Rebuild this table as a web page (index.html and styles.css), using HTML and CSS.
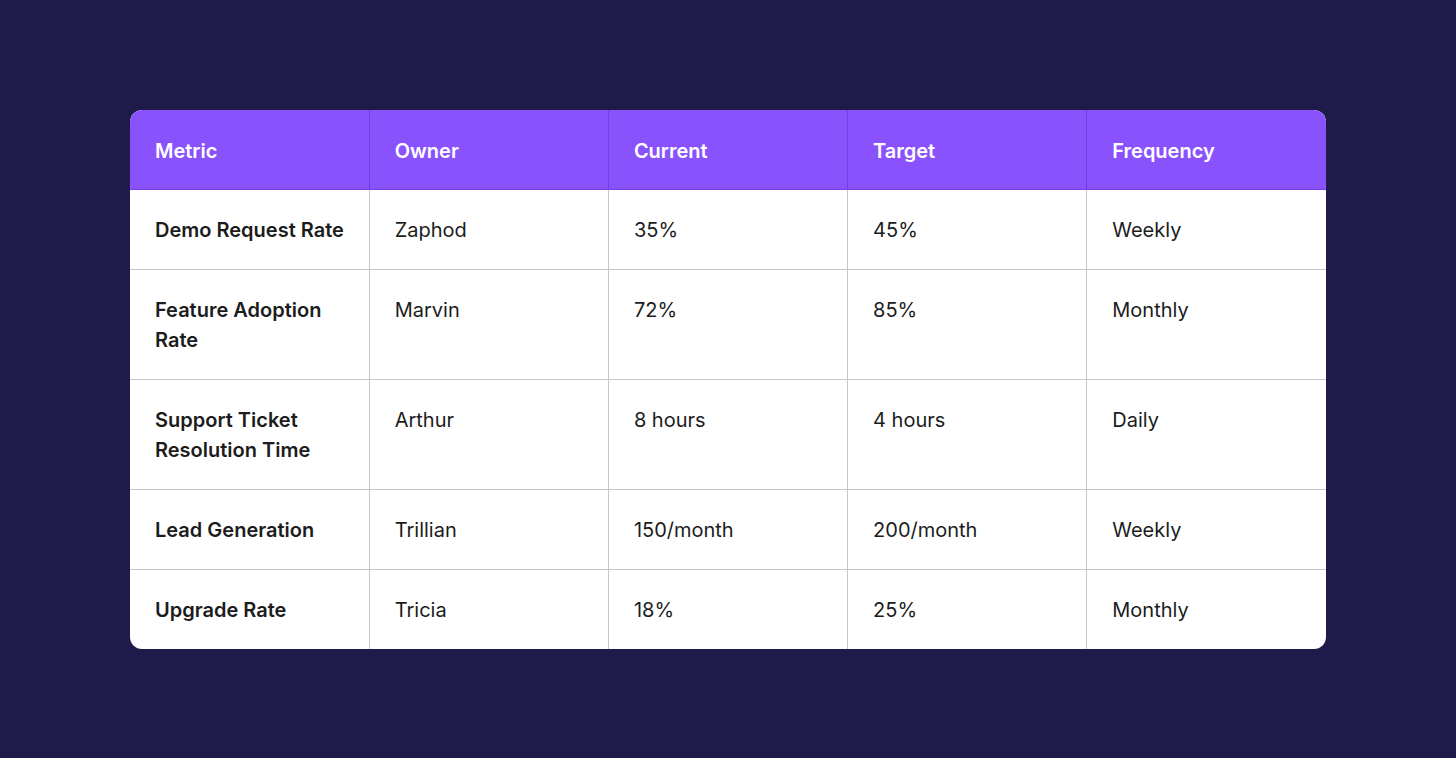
FILE: index.html
```html
<!DOCTYPE html>
<html>
<head>
<meta charset="utf-8">
<link rel="stylesheet" href="styles.css">
</head>
<body>
<div class="card">
<table class="metrics">
<thead>
<tr><th>Metric</th><th>Owner</th><th>Current</th><th>Target</th><th>Frequency</th></tr>
</thead>
<tbody>
<tr><td class="name">Demo Request Rate</td><td>Zaphod</td><td>35%</td><td>45%</td><td>Weekly</td></tr>
<tr><td class="name">Feature Adoption Rate</td><td>Marvin</td><td>72%</td><td>85%</td><td>Monthly</td></tr>
<tr><td class="name">Support Ticket Resolution Time</td><td>Arthur</td><td>8 hours</td><td>4 hours</td><td>Daily</td></tr>
<tr><td class="name">Lead Generation</td><td>Trillian</td><td>150/month</td><td>200/month</td><td>Weekly</td></tr>
<tr><td class="name">Upgrade Rate</td><td>Tricia</td><td>18%</td><td>25%</td><td>Monthly</td></tr>
</tbody>
</table>
</div>
</body>
</html>
```
FILE: styles.css
```css
html, body {
  margin: 0;
  padding: 0;
}
body {
  background: #1e1b4b;
  height: 100vh;
  display: flex;
  align-items: center;
  justify-content: center;
  font-family: Inter, "Noto Sans", sans-serif;
}
.card {
  width: 1196px;
  border-radius: 12px;
  overflow: hidden;
  background: #ffffff;
}
.metrics {
  width: 100%;
  border-collapse: collapse;
  table-layout: fixed;
  font-size: 20px;
  line-height: 30px;
}
.metrics th {
  background: #8a52fd;
  color: #ffffff;
  font-weight: 600;
  text-align: left;
  padding: 26px 12px 23px 25px;
  border-left: 1px solid #7440dd;
  border-bottom: 1px solid #7440dd;
}
.metrics td {
  color: #1c1c1c;
  vertical-align: top;
  padding: 25px 12px 24px 25px;
  border-left: 1px solid #c6c6c6;
  border-top: 1px solid #c6c6c6;
}
.metrics tbody tr:first-child td {
  border-top: none;
}
.metrics th:first-child,
.metrics td:first-child {
  border-left: none;
}
.metrics td.name {
  font-weight: 600;
}
```
